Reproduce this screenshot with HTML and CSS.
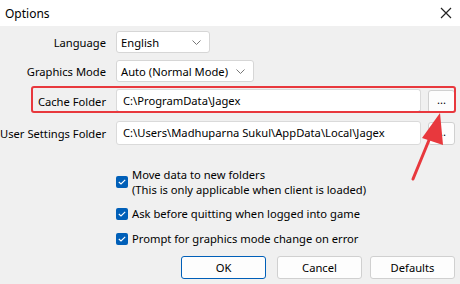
FILE: index.html
```html
<!DOCTYPE html>
<html>
<head>
    <title>Options</title>
    <link rel="stylesheet" href="styles.css">
</head>
<body>
    <div class="window">
        <div class="titlebar">
            <span class="title">Options</span>
            <svg class="close" width="12" height="12" viewBox="0 0 12 12">
                <path d="M1 1 L11 11 M11 1 L1 11" stroke="#222" stroke-width="1.2"/>
            </svg>
        </div>

        <div class="content">
            <div class="row row-lang">
                <label class="label">Language</label>
                <div class="select select-lang">
                    <span>English</span>
                    <svg class="chev" width="9" height="5" viewBox="0 0 9 5"><path d="M0.5 0.5 L4.5 4.5 L8.5 0.5" fill="none" stroke="#777" stroke-width="1"/></svg>
                </div>
            </div>

            <div class="row row-gfx">
                <label class="label">Graphics Mode</label>
                <div class="select select-gfx">
                    <span>Auto (Normal Mode)</span>
                    <svg class="chev" width="9" height="5" viewBox="0 0 9 5"><path d="M0.5 0.5 L4.5 4.5 L8.5 0.5" fill="none" stroke="#777" stroke-width="1"/></svg>
                </div>
            </div>

            <div class="row row-cache">
                <label class="label">Cache Folder</label>
                <div class="field focused">C:\ProgramData\Jagex</div>
                <div class="browse">...</div>
            </div>

            <div class="row row-user">
                <label class="label">User Settings Folder</label>
                <div class="field">C:\Users\Madhuparna Sukul\AppData\Local\Jagex</div>
                <div class="browse">...</div>
            </div>

            <div class="checks">
                <div class="check check-two">
                    <span class="box"><svg width="8" height="6" viewBox="0 0 8 6"><path d="M0.8 3 L3 5 L7.2 0.8" fill="none" stroke="#fff" stroke-width="1.1"/></svg></span>
                    <div class="check-text">
                        <div>Move data to new folders</div>
                        <div>(This is only applicable when client is loaded)</div>
                    </div>
                </div>
                <div class="check">
                    <span class="box"><svg width="8" height="6" viewBox="0 0 8 6"><path d="M0.8 3 L3 5 L7.2 0.8" fill="none" stroke="#fff" stroke-width="1.1"/></svg></span>
                    <div class="check-text">Ask before quitting when logged into game</div>
                </div>
                <div class="check">
                    <span class="box"><svg width="8" height="6" viewBox="0 0 8 6"><path d="M0.8 3 L3 5 L7.2 0.8" fill="none" stroke="#fff" stroke-width="1.1"/></svg></span>
                    <div class="check-text">Prompt for graphics mode change on error</div>
                </div>
            </div>

            <div class="buttons">
                <div class="btn btn-default">OK</div>
                <div class="btn">Cancel</div>
                <div class="btn btn-last">Defaults</div>
            </div>

            <!-- annotation overlays -->
            <div class="highlight"></div>
            <svg class="arrow" width="460" height="284" viewBox="0 0 460 284">
                <line x1="413" y1="179" x2="434" y2="128" stroke="#e8383d" stroke-width="3" stroke-linecap="round"/>
                <polygon points="440,113 443,145 422,138" fill="#e8383d"/>
            </svg>
        </div>
    </div>
</body>
</html>
```

FILE: styles.css
```css
body {
    margin: 0;
    padding: 0;
    font-family: "Noto Sans", "Open Sans", sans-serif;
    font-size: 11.2px;
    color: #000;
}

.window {
    width: 460px;
    height: 284px;
    overflow: hidden;
    position: relative;
}

.titlebar {
    height: 26px;
    background-color: #fff;
    display: flex;
    align-items: center;
    justify-content: space-between;
    padding: 0 8px 0 5px;
}

.title {
    font-size: 12px;
}

.content {
    background-color: #f0f0f0;
    height: 258px;
    box-sizing: border-box;
    padding-top: 5px;
}

.row {
    display: flex;
    align-items: center;
}

.label {
    width: 106px;
    text-align: right;
    margin-right: 10px;
    white-space: nowrap;
}

.select {
    height: 22px;
    box-sizing: border-box;
    background-color: #fff;
    border: 1px solid #d6d6d6;
    border-radius: 3px;
    display: flex;
    align-items: center;
    justify-content: space-between;
    padding: 0 8px 0 4px;
}

.select-lang {
    width: 94px;
}

.select-gfx {
    width: 138px;
}

.row-gfx {
    margin-top: 7px;
}

.row-cache {
    margin-top: 7px;
}

.row-user {
    margin-top: 8px;
}

.field {
    width: 305px;
    height: 24px;
    box-sizing: border-box;
    background-color: #fff;
    border: 1px solid #dadada;
    border-radius: 3px;
    padding: 0 6px;
    line-height: 21px;
    white-space: nowrap;
    overflow: hidden;
}

.field.focused {
    border-bottom: 2px solid #005fb8;
}

.browse {
    width: 27px;
    height: 23px;
    box-sizing: border-box;
    margin-left: 7px;
    background-color: #fdfdfd;
    border: 1px solid #d0d0d0;
    border-radius: 3px;
    text-align: center;
    line-height: 18px;
}

.checks {
    margin-top: 22px;
    padding-left: 116px;
}

.check {
    display: flex;
    align-items: center;
    margin-bottom: 10px;
}

.check-two {
    margin-bottom: 9px;
}

.box {
    width: 12px;
    height: 12px;
    border-radius: 2px;
    background-color: #005fb8;
    display: flex;
    align-items: center;
    justify-content: center;
    margin-right: 4px;
    flex-shrink: 0;
}

.check-text {
    line-height: 15px;
}

.buttons {
    display: flex;
    justify-content: flex-end;
    padding-right: 5px;
    margin-top: 2px;
}

.btn {
    width: 85px;
    height: 23px;
    box-sizing: border-box;
    background-color: #fdfdfd;
    border: 1px solid #d0d0d0;
    border-radius: 3px;
    text-align: center;
    line-height: 21px;
    margin-left: 11px;
}

.btn-last {
    margin-left: 8px;
}

.btn-default {
    border-color: #005fb8;
}

.highlight {
    position: absolute;
    left: 31px;
    top: 86px;
    width: 425px;
    height: 27px;
    box-sizing: border-box;
    border: 2px solid #e8383d;
    border-radius: 3px;
}

.arrow {
    position: absolute;
    left: 0;
    top: 0;
}
```
